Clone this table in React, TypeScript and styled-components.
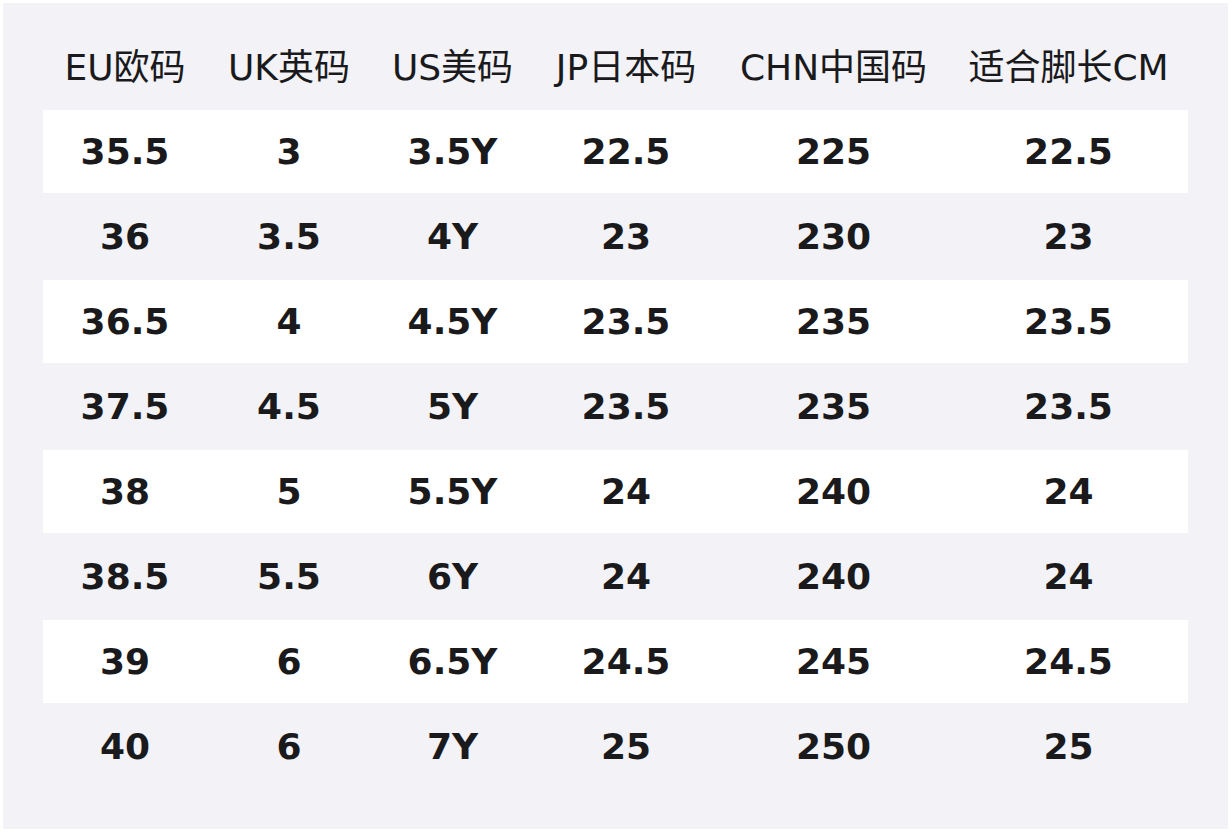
import React from 'react';
import styled, { createGlobalStyle } from 'styled-components';

const GlobalStyle = createGlobalStyle`
  html, body {
    margin: 0;
    padding: 0;
    background: #ffffff;
  }
`;

const Panel = styled.div`
  box-sizing: border-box;
  margin: 3px;
  width: 1225px;
  height: 826px;
  background: #f2f2f7;
  padding: 22px 40px 0 40px;
  font-family: 'DejaVu Sans', 'Noto Sans CJK SC', sans-serif;
  color: #1a1a1c;
`;

const columns = '164px 164px 163px 184px 231px 239px';

const HeaderRow = styled.div`
  box-sizing: border-box;
  display: grid;
  grid-template-columns: ${columns};
  height: 85px;
  padding-bottom: 7px;
  align-items: center;
`;

const HeaderCell = styled.div`
  text-align: center;
  font-size: 36px;
  font-weight: 400;
  white-space: nowrap;
`;

const Row = styled.div<{ $white: boolean }>`
  display: grid;
  grid-template-columns: ${columns};
  height: ${(p) => (p.$white ? 83 : 87)}px;
  align-items: center;
  background: ${(p) => (p.$white ? '#ffffff' : 'transparent')};
`;

const Cell = styled.div`
  text-align: center;
  font-size: 36px;
  font-weight: 700;
  white-space: nowrap;
`;

const headers = ['EU欧码', 'UK英码', 'US美码', 'JP日本码', 'CHN中国码', '适合脚长CM'];

const rows = [
  ['35.5', '3', '3.5Y', '22.5', '225', '22.5'],
  ['36', '3.5', '4Y', '23', '230', '23'],
  ['36.5', '4', '4.5Y', '23.5', '235', '23.5'],
  ['37.5', '4.5', '5Y', '23.5', '235', '23.5'],
  ['38', '5', '5.5Y', '24', '240', '24'],
  ['38.5', '5.5', '6Y', '24', '240', '24'],
  ['39', '6', '6.5Y', '24.5', '245', '24.5'],
  ['40', '6', '7Y', '25', '250', '25'],
];

export default function App() {
  return (
    <>
      <GlobalStyle />
      <Panel>
        <HeaderRow>
          {headers.map((h) => (
            <HeaderCell key={h}>{h}</HeaderCell>
          ))}
        </HeaderRow>
        {rows.map((r, i) => (
          <Row key={i} $white={i % 2 === 0}>
            {r.map((c, j) => (
              <Cell key={j}>{c}</Cell>
            ))}
          </Row>
        ))}
      </Panel>
    </>
  );
}
